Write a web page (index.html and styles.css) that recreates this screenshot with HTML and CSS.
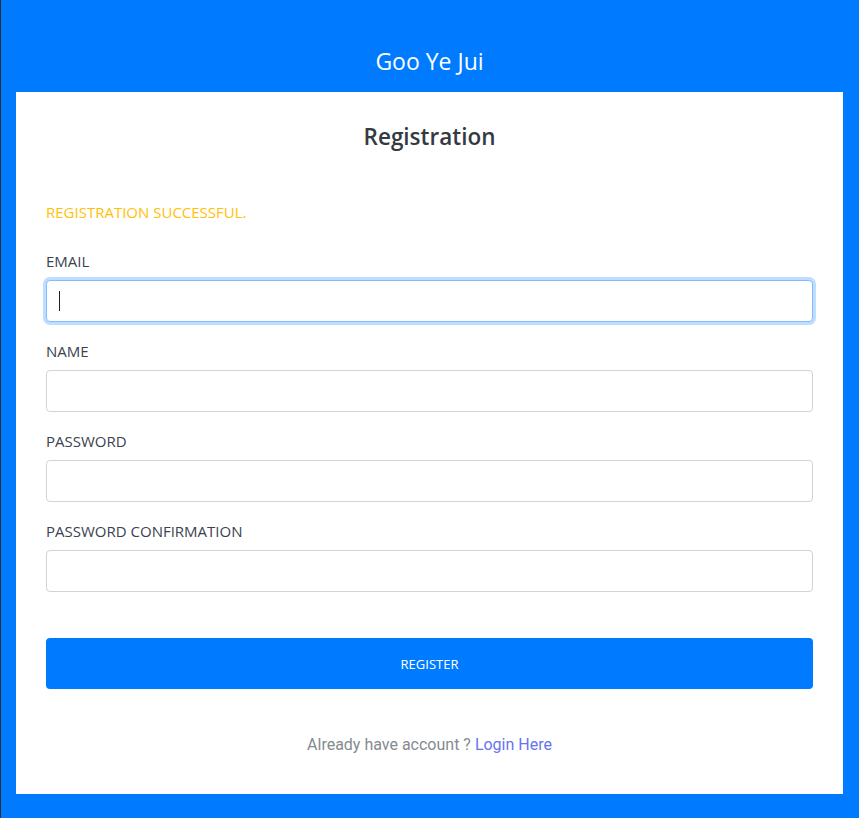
FILE: index.html
```html
<!DOCTYPE html>
<html lang="en">
<head>
<meta charset="utf-8">
<title>Registration</title>
<link rel="stylesheet" href="styles.css">
</head>
<body>
<div class="page">
  <header class="topbar">
    <h1 class="brand">Goo Ye Jui</h1>
  </header>
  <main class="card">
    <h2 class="card-title">Registration</h2>
    <p class="alert">REGISTRATION SUCCESSFUL.</p>
    <form class="form">
      <div class="group">
        <label class="label" for="email">EMAIL</label>
        <div class="field">
          <input class="input focused" id="email" type="email">
          <span class="caret"></span>
        </div>
      </div>
      <div class="group">
        <label class="label" for="name">NAME</label>
        <div class="field"><input class="input" id="name" type="text"></div>
      </div>
      <div class="group">
        <label class="label" for="password">PASSWORD</label>
        <div class="field"><input class="input" id="password" type="password"></div>
      </div>
      <div class="group">
        <label class="label" for="password2">PASSWORD CONFIRMATION</label>
        <div class="field"><input class="input" id="password2" type="password"></div>
      </div>
      <button class="btn" type="button">REGISTER</button>
    </form>
    <p class="footer">Already have account ? <a class="link" href="#">Login Here</a></p>
  </main>
</div>
</body>
</html>
```
FILE: styles.css
```css
* { box-sizing: border-box; }
html, body { margin: 0; padding: 0; }
body {
  background: #007bff;
  font-family: "Open Sans", "Noto Sans", sans-serif;
  border-left: 1px solid #2b2f36;
  min-height: 818px;
}
.page {
  padding: 0 16px 24px 15px;
}
.topbar {
  padding-top: 46px;
  padding-bottom: 16px;
}
.brand {
  margin: 0;
  text-align: center;
  color: #fff;
  font-weight: 400;
  font-size: 23px;
  line-height: 30px;
}
.card {
  background: #fff;
  padding: 30px 30px 39px;
}
.card-title {
  margin: 0;
  text-align: center;
  font-size: 22.5px;
  line-height: 30px;
  font-weight: 600;
  color: #343a40;
}
.alert {
  margin: 50px 0 0;
  font-size: 15px;
  line-height: 20px;
  color: #ffc107;
}
.form {
  margin-top: 29px;
  display: flex;
  flex-direction: column;
}
.group {
  display: flex;
  flex-direction: column;
  gap: 9px;
  margin-bottom: 19px;
}
.label {
  font-size: 15px;
  line-height: 20px;
  color: #3a4250;
}
.field { position: relative; }
.input {
  display: block;
  width: 100%;
  height: 42px;
  border: 1px solid #ced4da;
  border-radius: 4px;
  background: #fff;
  padding: 6px 12px;
  font-size: 16px;
  outline: none;
}
.input.focused {
  border-color: #80bdff;
  box-shadow: 0 0 0 3px rgba(0, 123, 255, 0.25);
}
.caret {
  position: absolute;
  left: 13px;
  top: 11px;
  width: 1px;
  height: 20px;
  background: #222;
}
.btn {
  margin-top: 27px;
  height: 51px;
  width: 100%;
  border: none;
  border-radius: 4px;
  background: #007bff;
  color: #fff;
  font-family: "Open Sans", "Noto Sans", sans-serif;
  font-size: 13px;
}
.footer {
  margin: 46px 0 0;
  text-align: center;
  font-family: Roboto, sans-serif;
  font-size: 16px;
  line-height: 20px;
  color: #858a90;
}
.link {
  color: #6574f0;
  text-decoration: none;
}
```
